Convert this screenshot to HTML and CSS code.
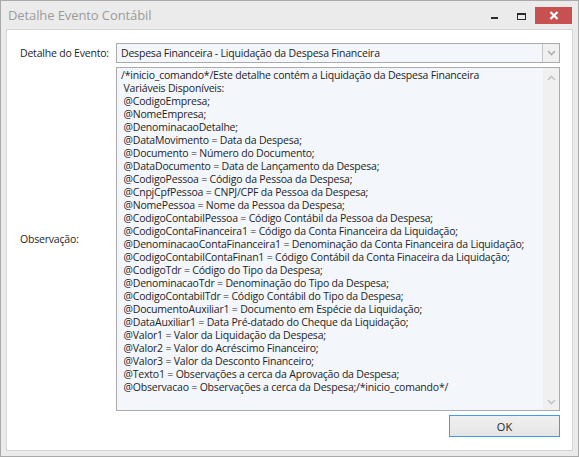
FILE: index.html
```html
<!DOCTYPE html>
<html>
<head>
    <title>Detalhe Evento Contábil</title>
    <link rel="stylesheet" href="styles.css">
</head>
<body>
    <div class="window">
        <div class="titlebar">
            <span class="title">Detalhe Evento Contábil</span>
            <div class="controls">
                <span class="ctl"><span class="min-glyph"></span></span>
                <span class="ctl"><span class="max-glyph"></span></span>
                <span class="ctl close">
                    <svg width="10" height="9" viewBox="0 0 10 9"><path d="M1.5 1 L8.5 8 M8.5 1 L1.5 8" stroke="#fff" stroke-width="2.2" fill="none"/></svg>
                </span>
            </div>
        </div>
        <div class="panel">
            <div class="form">
                <label class="field-label">Detalhe do Evento:</label>
                <div class="combo">
                    <span class="combo-text">Despesa Financeira - Liquidação da Despesa Financeira</span>
                    <span class="drop">
                        <svg width="9" height="6" viewBox="0 0 9 6"><path d="M1 1 L4.5 4.5 L8 1" stroke="#acacac" stroke-width="1.6" fill="none"/></svg>
                    </span>
                </div>
                <label class="field-label">Observação:</label>
                <div class="memo">
<div class="memo-text">/*inicio_comando*/Este detalhe contém a Liquidação da Despesa Financeira
 Variáveis Disponíveis:
 @CodigoEmpresa;
 @NomeEmpresa;
 @DenominacaoDetalhe;
 @DataMovimento = Data da Despesa;
 @Documento = Número do Documento;
 @DataDocumento = Data de Lançamento da Despesa;
 @CodigoPessoa = Código da Pessoa da Despesa;
 @CnpjCpfPessoa = CNPJ/CPF da Pessoa da Despesa;
 @NomePessoa = Nome da Pessoa da Despesa;
 @CodigoContabilPessoa = Código Contábil da Pessoa da Despesa;
 @CodigoContaFinanceira1 = Código da Conta Financeira da Liquidação;
 @DenominacaoContaFinanceira1 = Denominação da Conta Financeira da Liquidação;
 @CodigoContabilContaFinan1 = Código Contábil da Conta Finaceira da Liquidação;
 @CodigoTdr = Código do Tipo da Despesa;
 @DenominacaoTdr = Denominação do Tipo da Despesa;
 @CodigoContabilTdr = Código Contábil do Tipo da Despesa;
 @DocumentoAuxiliar1 = Documento em Espécie da Liquidação;
 @DataAuxiliar1 = Data Pré-datado do Cheque da Liquidação;
 @Valor1 = Valor da Liquidação da Despesa;
 @Valor2 = Valor do Acréscimo Financeiro;
 @Valor3 = Valor da Desconto Financeiro;
 @Texto1 = Observações a cerca da Aprovação da Despesa;
 @Observacao = Observações a cerca da Despesa;/*inicio_comando*/</div>
                    <div class="scroll">
                        <svg width="9" height="6" viewBox="0 0 9 6"><path d="M1 5 L4.5 1.5 L8 5" stroke="#c4c4c4" stroke-width="1.6" fill="none"/></svg>
                        <svg width="9" height="6" viewBox="0 0 9 6"><path d="M1 1 L4.5 4.5 L8 1" stroke="#c4c4c4" stroke-width="1.6" fill="none"/></svg>
                    </div>
                </div>
            </div>
            <div class="actions">
                <button class="button">OK</button>
            </div>
        </div>
    </div>
</body>
</html>
```

FILE: styles.css
```css
body {
    margin: 0;
    padding: 0;
    font-family: "Open Sans", "Noto Sans", sans-serif;
    background-color: #ebebeb;
}
.window {
    width: 579px;
    height: 457px;
    box-sizing: border-box;
    border: 1px solid #a9a9a9;
    background-color: #ebebeb; /* moldura cinza */
    padding: 0 5px 5px 5px;
    display: flex;
    flex-direction: column;
}
.titlebar {
    height: 28px;
    display: flex;
    align-items: flex-start;
    justify-content: space-between;
    margin: 0 -5px;
}
.title {
    font-size: 13px;
    letter-spacing: -0.1px;
    color: #9b9b9b;
    padding: 5px 0 0 7px;
}
.controls {
    display: flex;
    align-items: flex-start;
    margin-top: 6px;
    margin-right: 6px;
}
.ctl {
    width: 27px;
    height: 17px;
    display: flex;
    align-items: center;
    justify-content: center;
}
.min-glyph {
    width: 7px;
    height: 2px;
    background-color: #2b2b2b;
    margin-top: 5px;
}
.max-glyph {
    width: 7px;
    height: 4px;
    border: 1px solid #2b2b2b;
    border-top-width: 2px;
    margin-top: 1px;
}
.close {
    width: 37px;
    background-color: #c75050; /* vermelho do fechar */
}
.panel {
    flex: 1;
    background-color: #ffffff;
    border: 1px solid #d5d5d5;
    padding: 13px 12px 13px 13px;
    display: flex;
    flex-direction: column;
}
.form {
    flex: 1;
    display: grid;
    grid-template-columns: 96px 1fr;
    grid-template-rows: 20px 1fr;
    row-gap: 4px;
    align-items: center;
}
.field-label {
    font-size: 10.5px;
    letter-spacing: -0.2px;
    color: #1e1e1e;
    white-space: nowrap;
}
.combo {
    height: 20px;
    box-sizing: border-box;
    border: 1px solid #ababab;
    background-color: #f3f6fb;
    display: flex;
    align-items: center;
}
.combo-text {
    flex: 1;
    font-size: 10.5px;
    letter-spacing: -0.2px;
    color: #1e1e1e;
    padding-left: 4px;
}
.drop {
    width: 16px;
    height: 18px;
    border-left: 1px solid #c8c8c8;
    background-color: #f0f0f0;
    display: flex;
    align-items: center;
    justify-content: center;
}
.memo {
    align-self: stretch;
    box-sizing: border-box;
    border: 1px solid #ababab;
    background-color: #f3f6fb; /* azul bem claro */
    display: flex;
}
.memo-text {
    flex: 1;
    white-space: pre;
    overflow: hidden;
    font-size: 10.5px;
    letter-spacing: -0.2px;
    line-height: 13px;
    color: #1e1e1e;
    padding: 1px 0 0 4px;
}
.scroll {
    width: 16px;
    background-color: #f0f0f0;
    display: flex;
    flex-direction: column;
    justify-content: space-between;
    align-items: center;
    padding: 7px 0 5px 0;
}
.actions {
    display: flex;
    justify-content: flex-end;
    margin-top: 4px;
}
.button {
    width: 111px;
    height: 22px;
    border: 1px solid #3c9bf5;
    background: linear-gradient(#f0f0f0, #e5e5e5);
    font-family: "Open Sans", "Noto Sans", sans-serif;
    font-size: 11px;
    color: #1e1e1e;
    padding: 0;
}
```
